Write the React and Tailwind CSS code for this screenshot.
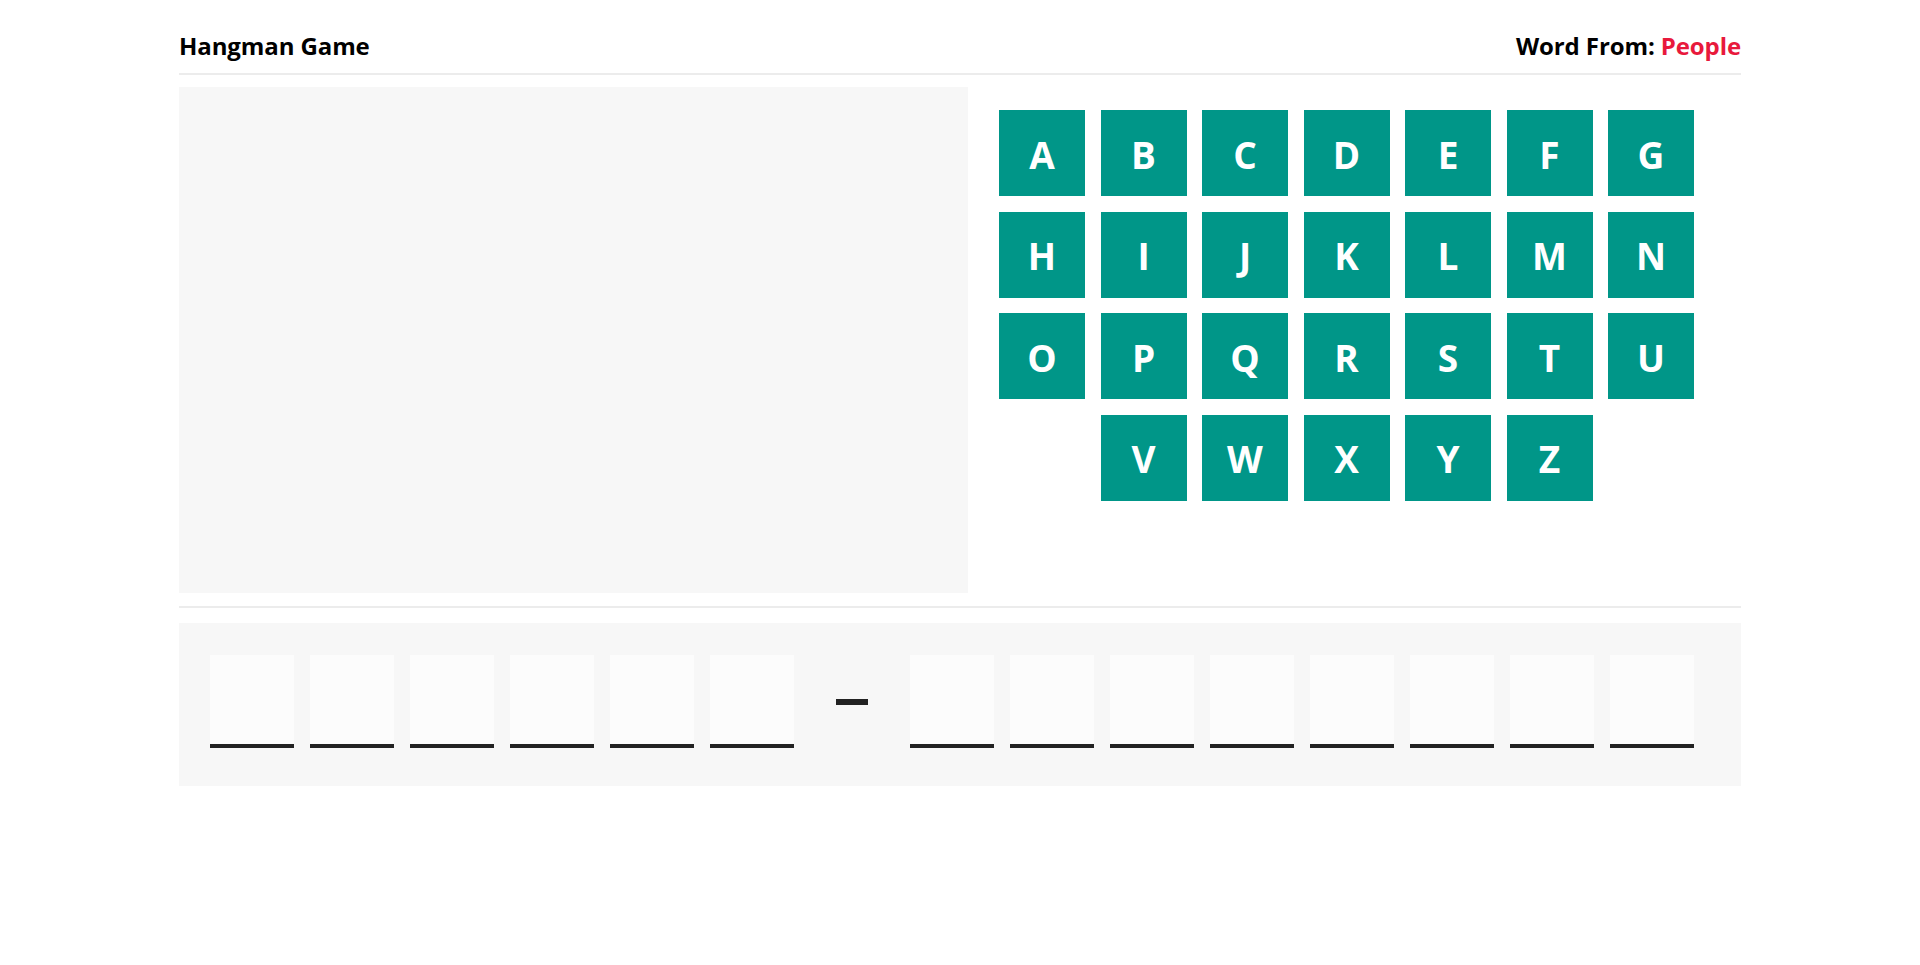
import React from "react";

const rows = [
  ["A", "B", "C", "D", "E", "F", "G"],
  ["H", "I", "J", "K", "L", "M", "N"],
  ["O", "P", "Q", "R", "S", "T", "U"],
  ["V", "W", "X", "Y", "Z"],
];
const letters = rows.flat();

const slots = [0, 0, 0, 0, 0, 0, 1, 0, 0, 0, 0, 0, 0, 0, 0];

export default function App() {
  return (
    <div
      className="w-full min-h-[965px] bg-white"
      style={{ fontFamily: '"Open Sans", "Noto Sans", sans-serif' }}
    >
      <div className="mx-auto w-[1562px]">
        <header className="flex h-[75px] items-center justify-between border-b-2 border-[#ececec] pt-[18px] text-[24px] font-bold text-black">
          <span className="tracking-[-0.1px]">Hangman Game</span>
          <span className="tracking-[-0.1px]">
            Word From: <span className="text-[#e8193c]">People</span>
          </span>
        </header>

        <section className="mt-[12px] flex border-b-2 border-[#ececec] pb-[13px]">
          <div className="h-[506px] w-[789px] bg-[#f7f7f7]" />
          <div className="ml-[31px] mt-[23px] flex w-[695px] flex-wrap content-start justify-center gap-x-[15.5px] gap-y-[15.5px]">
            {letters.map((l) => (
              <button
                key={l}
                className="flex h-[86px] w-[86px] items-center justify-center bg-[#009688] pt-[2px] text-[37px] font-bold leading-none text-white"
              >
                {l}
              </button>
            ))}
          </div>
        </section>

        <section className="mt-[15px] flex h-[163px] items-start bg-[#f7f7f7] px-[31px] pt-[32px]">
          {slots.map((s, i) =>
            s ? (
              <div
                key={i}
                className="mr-[16px] flex h-[93px] w-[84px] items-center justify-center"
              >
                <div className="h-[6px] w-[32px] bg-[#222222]" />
              </div>
            ) : (
              <div
                key={i}
                className="mr-[16px] h-[93px] w-[84px] border-b-4 border-[#222222] bg-[#fcfcfc]"
              />
            )
          )}
        </section>
      </div>
    </div>
  );
}
